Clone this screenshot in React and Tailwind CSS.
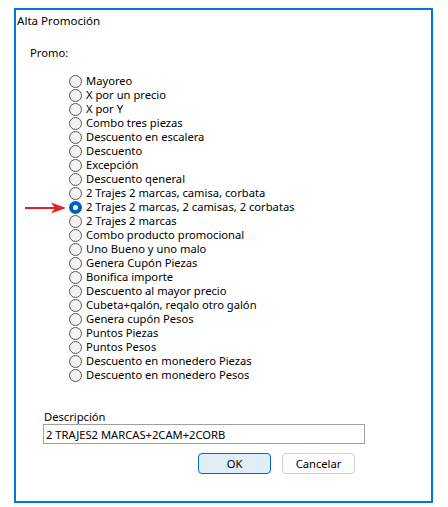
import { useState } from "react";

const promos = [
  "Mayoreo",
  "X por un precio",
  "X por Y",
  "Combo tres piezas",
  "Descuento en escalera",
  "Descuento",
  "Excepción",
  "Descuento qeneral",
  "2 Trajes 2 marcas, camisa, corbata",
  "2 Trajes 2 marcas, 2 camisas, 2 corbatas",
  "2 Trajes 2 marcas",
  "Combo producto promocional",
  "Uno Bueno y uno malo",
  "Genera Cupón Piezas",
  "Bonifica importe",
  "Descuento al mayor precio",
  "Cubeta+qalón, reqalo otro galón",
  "Genera cupón Pesos",
  "Puntos Piezas",
  "Puntos Pesos",
  "Descuento en monedero Piezas",
  "Descuento en monedero Pesos",
];

function Radio({ checked }) {
  if (checked) {
    return (
      <span className="w-[13px] h-[13px] rounded-full bg-[#005fb8] flex items-center justify-center shrink-0">
        <span className="w-[5px] h-[5px] rounded-full bg-white"></span>
      </span>
    );
  }
  return <span className="w-[13px] h-[13px] rounded-full border border-[#555] bg-[#f3f3f3] shrink-0"></span>;
}

export default function App() {
  const [selected, setSelected] = useState(9);
  const [desc, setDesc] = useState("2 TRAJES2 MARCAS+2CAM+2CORB");

  return (
    <div className="w-[448px] h-[507px] bg-white pt-[8px] pl-[14px] text-[11.2px] text-black" style={{ fontFamily: '"Noto Sans", sans-serif' }}>
      <div className="relative w-[419px] h-[495px] border-2 border-[#0078d7] flex flex-col">
        <div className="pl-[1px] mt-[3px] leading-[16px] text-[11.6px]">Alta Promoción</div>

        <div className="pl-[14px] mt-[16px] leading-[16px]">Promo:</div>

        {/* Lista de promociones */}
        <div className="flex flex-col pl-[53px] mt-[13px]">
          {promos.map((p, i) => (
            <label key={p} onClick={() => setSelected(i)} className="h-[14px] flex items-center gap-[4px] leading-[14px] cursor-default whitespace-nowrap">
              <Radio checked={selected === i} />
              <span>{p}</span>
            </label>
          ))}
        </div>

        {/* Flecha */}
        <svg className="absolute left-[9px] top-[191px]" width="42" height="14" viewBox="0 0 42 14">
          <line x1="0" y1="7" x2="30" y2="7" stroke="#e8202a" strokeWidth="2" />
          <polygon points="26,1.5 41,7 26,12.5 30,7" fill="#e8202a" />
        </svg>

        <div className="pl-[28px] mt-[28px] leading-[14px]">Descripción</div>
        <input
          value={desc}
          onChange={(e) => setDesc(e.target.value)}
          className="ml-[27px] mt-[0px] w-[322px] h-[20px] border border-[#a0a0a0] px-[2px] text-[11.2px] outline-none"
          style={{ fontFamily: '"Noto Sans", sans-serif' }}
        />

        <div className="flex gap-[11px] ml-[182px] mt-[9px]">
          <button className="w-[73px] h-[21px] rounded-[4px] border border-[#0067c0] bg-[#e0eef9] leading-[19px]">OK</button>
          <button className="w-[73px] h-[21px] rounded-[4px] border border-[#d0d0d0] bg-[#fdfdfd] leading-[19px]">Cancelar</button>
        </div>
      </div>
    </div>
  );
}
